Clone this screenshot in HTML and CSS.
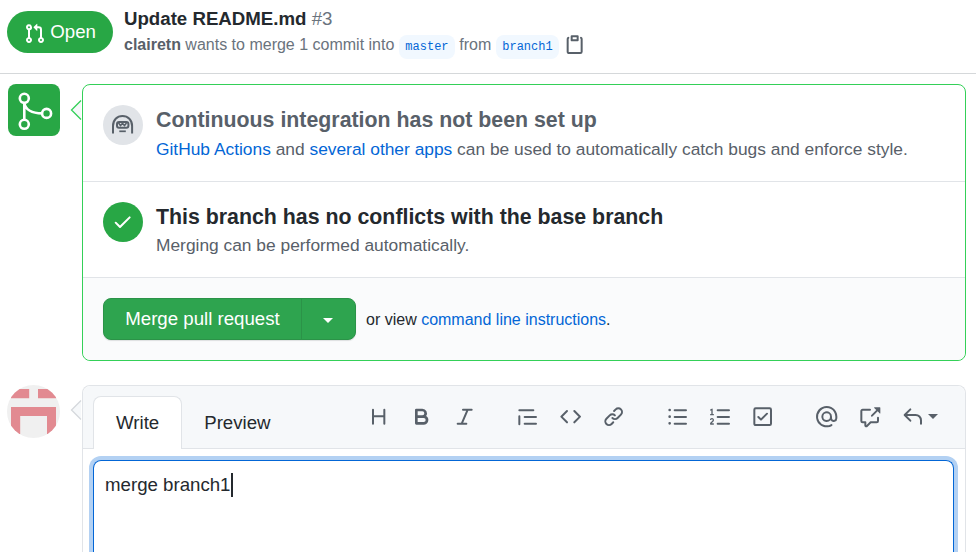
FILE: index.html
```html
<!DOCTYPE html>
<html lang="en">
<head>
<meta charset="utf-8">
<title>Update README.md #3</title>
<link rel="stylesheet" href="styles.css">
</head>
<body>
<header class="pr-header">
  <span class="state">
    <svg class="icon" viewBox="0 0 16 16"><path d="M7.177 3.073L9.573.677A.25.25 0 0110 .854v4.792a.25.25 0 01-.427.177L7.177 3.427a.25.25 0 010-.354zM3.75 2.5a.75.75 0 100 1.5.75.75 0 000-1.5zm-2.25.75a2.25 2.25 0 113 2.122v5.256a2.251 2.251 0 11-1.5 0V5.372A2.25 2.25 0 011.5 3.25zM11 2.5h-1V4h1a1 1 0 011 1v5.628a2.251 2.251 0 101.5 0V5A2.5 2.5 0 0011 2.5zm1 10.25a.75.75 0 111.5 0 .75.75 0 01-1.5 0zM3.75 12a.75.75 0 100 1.5.75.75 0 000-1.5z"/></svg>
    <span>Open</span>
  </span>
  <div class="pr-info">
    <h1 class="pr-title">Update README.md <span class="number">#3</span></h1>
    <div class="pr-meta"><span><b>clairetn</b> wants to merge 1 commit into</span><code class="ref">master</code><span>from</span><code class="ref">branch1</code>
      <svg class="icon copy" viewBox="0 0 16 16"><path d="M5.75 1a.75.75 0 00-.75.75v3c0 .414.336.75.75.75h4.5a.75.75 0 00.75-.75v-3a.75.75 0 00-.75-.75h-4.5zm.75 3V2.5h3V4h-3zm-2.874-.467a.75.75 0 00-.752-1.298A1.75 1.75 0 002 3.75v9.5c0 .966.784 1.75 1.75 1.75h8.5A1.75 1.75 0 0014 13.25v-9.5a1.75 1.75 0 00-.874-1.515.75.75 0 10-.752 1.298.25.25 0 01.126.217v9.5a.25.25 0 01-.25.25h-8.5a.25.25 0 01-.25-.25v-9.5a.25.25 0 01.126-.217z"/></svg>
    </div>
  </div>
</header>
<main>
  <section class="timeline merge">
    <div class="badge">
      <svg viewBox="0 0 52 52" fill="none" stroke="#fff" stroke-width="2.6"><circle cx="16.3" cy="14.3" r="4.5"/><circle cx="16.3" cy="40.3" r="4.5"/><circle cx="38.6" cy="29.4" r="4.5"/><path d="M16.3 18.8v17M16.3 19c1 6 7 10.4 17.800 10.400"/></svg>
    </div>
    <div class="panel merge-panel">
      <svg class="pointer" viewBox="0 0 11 20"><path d="M11 .5L1.500 10L11 19.500" fill="#f6f8fa" stroke="#34d058" stroke-width="1.300"/></svg>
      <div class="row row-ci">
        <span class="status pending">
          <svg viewBox="0 0 40 40" fill="none" stroke="#586069" stroke-width="2"><path d="M10 28.500v-7.500c0-6 4-10 9.500-10s9.600 4 9.600 10v7.500"/><rect x="14" y="17" width="11.400" height="5.700" rx="2"/><path d="M15.500 18l2 2.500 2-2 2 2 2-2.500" stroke-width="1.600"/><path d="M16.300 26.300h6.500" stroke-width="1.700"/></svg>
        </span>
        <div><h2 class="muted ci-title">Continuous integration has not been set up</h2><p class="desc ci-desc"><a>GitHub Actions</a> and <a>several other apps</a> can be used to automatically catch bugs and enforce style.</p></div>
      </div>
      <div class="row row-clean">
        <span class="status success"><svg viewBox="0 0 16 16" class="icon"><path d="M13.780 4.220a.75.75 0 010 1.060l-7.250 7.250a.75.75 0 01-1.060 0L2.220 9.280a.75.75 0 011.060-1.060L6 10.940l6.720-6.720a.75.75 0 011.060 0z"/></svg></span>
        <div><h2 class="clean-title">This branch has no conflicts with the base branch</h2><p class="desc clean-desc">Merging can be performed automatically.</p></div>
      </div>
      <div class="actions">
        <div class="button-group"><button class="button main-button">Merge pull request</button><button class="button menu-button" aria-label="Select merge method"><i class="caret"></i></button></div>
        <p class="cli">or view <a>command line instructions</a>.</p>
      </div>
    </div>
  </section>
  <section class="timeline comment">
    <div class="avatar"><svg viewBox="0 0 53 53"><rect width="53" height="53" fill="#f0f0f0"/><path d="M4 4h18.200v9.200H4zM31 4h18.200v9.200H31zM4 22h45v27h-9V31H13.200v18H4z" fill="#e28a91"/></svg></div>
    <div class="panel editor">
      <svg class="pointer" viewBox="0 0 11 20"><path d="M11 .5L1.500 10L11 19.500" fill="#f6f8fa" stroke="#d5d8dc" stroke-width="1.300"/></svg>
      <div class="tabs">
        <span class="tab selected">Write</span><span class="tab preview">Preview</span>
        <div class="toolbar">
          <div class="tools tools-text">
            <svg class="icon" viewBox="0 0 16 16"><path d="M3.750 2a.75.75 0 01.75.75V7h7V2.750a.75.75 0 011.500 0v10.500a.75.75 0 01-1.500 0V8.500h-7v4.750a.75.75 0 01-1.500 0V2.750A.75.75 0 013.750 2z"/></svg>
            <svg class="icon" viewBox="0 0 16 16"><path d="M4 2a1 1 0 00-1 1v10a1 1 0 001 1h5.500a3.500 3.500 0 001.852-6.470A3.500 3.500 0 008.500 2H4zm4.500 5a1.500 1.500 0 100-3H5v3h3.500zM5 9v3h4.500a1.500 1.500 0 000-3H5z" fill-rule="evenodd"/></svg>
            <svg class="icon" viewBox="0 0 16 16"><path d="M6 2.750A.75.75 0 016.750 2h6.500a.75.75 0 010 1.500h-2.505l-3.858 9H9.250a.75.75 0 010 1.500h-6.500a.75.75 0 010-1.500h2.505l3.858-9H6.750A.75.75 0 016 2.750z"/></svg>
          </div>
          <div class="tools tools-code">
            <svg class="icon" viewBox="0 0 16 16"><path d="M1.750 2.500a.75.75 0 000 1.500h10.500a.75.75 0 000-1.500H1.750zm4 5a.75.75 0 000 1.500h8.500a.75.75 0 000-1.500h-8.500zm0 5a.75.75 0 000 1.500h8.500a.75.75 0 000-1.500h-8.500zM2.500 7.750a.75.75 0 00-1.500 0v6a.75.75 0 001.500 0v-6z"/></svg>
            <svg class="icon" viewBox="0 0 16 16"><path d="M4.720 3.220a.75.75 0 011.060 1.060L2.060 8l3.720 3.720a.75.75 0 11-1.060 1.060L.47 8.530a.75.75 0 010-1.060l4.250-4.250zm6.560 0a.75.75 0 10-1.060 1.060L13.940 8l-3.720 3.720a.75.75 0 101.060 1.060l4.250-4.250a.75.75 0 000-1.060l-4.250-4.250z"/></svg>
            <svg class="icon" viewBox="0 0 16 16"><path d="M7.775 3.275a.75.75 0 001.060 1.060l1.250-1.250a2 2 0 112.830 2.830l-2.500 2.500a2 2 0 01-2.830 0 .75.75 0 00-1.060 1.060 3.500 3.500 0 004.950 0l2.500-2.500a3.500 3.500 0 00-4.950-4.950l-1.250 1.250zm-4.690 9.640a2 2 0 010-2.830l2.500-2.500a2 2 0 012.830 0 .75.75 0 001.060-1.060 3.500 3.500 0 00-4.950 0l-2.500 2.500a3.500 3.500 0 004.950 4.950l1.250-1.250a.75.75 0 00-1.060-1.060l-1.250 1.250a2 2 0 01-2.830 0z"/></svg>
          </div>
          <div class="tools tools-list">
            <svg class="icon" viewBox="0 0 16 16"><path d="M2 4a1 1 0 100-2 1 1 0 000 2zm3.750-1.500a.75.75 0 000 1.500h8.500a.75.75 0 000-1.500h-8.500zm0 5a.75.75 0 000 1.500h8.500a.75.75 0 000-1.500h-8.500zm0 5a.75.75 0 000 1.500h8.500a.75.75 0 000-1.500h-8.500zM3 8a1 1 0 11-2 0 1 1 0 012 0zm-1 6a1 1 0 100-2 1 1 0 000 2z"/></svg>
            <svg class="icon" viewBox="0 0 16 16"><path d="M2.003 2.500a.5.5 0 00-.723-.447l-1.003.5a.5.5 0 00.446.895l.28-.14V6H.5a.5.5 0 000 1h2.006a.5.5 0 100-1h-.503V2.500zM5 3.250a.75.75 0 01.75-.75h8.500a.75.75 0 010 1.500h-8.500A.75.75 0 015 3.250zm0 5a.75.75 0 01.75-.75h8.500a.75.75 0 010 1.500h-8.500A.75.75 0 015 8.250zm0 5a.75.75 0 01.75-.75h8.500a.75.75 0 010 1.500h-8.500a.75.75 0 01-.75-.75zM.924 10.320a.5.5 0 01-.851-.525l.001-.001.001-.002.002-.004.007-.011c.097-.144.215-.273.348-.384.228-.190.588-.392 1.068-.392.468 0 .858.181 1.126.484.259.294.377.673.377 1.038 0 .987-.686 1.495-1.156 1.845l-.047.035c-.303.225-.522.400-.654.597h1.357a.5.5 0 010 1H.5a.5.5 0 01-.5-.5c0-1.005.692-1.520 1.167-1.875l.035-.025c.531-.396.800-.625.800-1.078a.57.57 0 00-.128-.376C1.806 10.068 1.695 10 1.500 10a.658.658 0 00-.429.163.835.835 0 00-.144.153l-.003.004z"/></svg>
            <svg class="icon" viewBox="0 0 16 16"><path d="M2.500 2.750a.25.25 0 01.25-.25h10.500a.25.25 0 01.25.25v10.500a.25.25 0 01-.25.25H2.750a.25.25 0 01-.25-.25V2.750zM2.750 1A1.750 1.750 0 001 2.750v10.500c0 .966.784 1.750 1.750 1.750h10.500A1.750 1.750 0 0015 13.250V2.750A1.750 1.750 0 0013.250 1H2.750zm9.030 5.280a.75.75 0 00-1.060-1.060L6.750 9.190 5.280 7.720a.75.75 0 00-1.060 1.060l2 2a.75.75 0 001.060 0l4.500-4.500z"/></svg>
          </div>
          <div class="tools tools-social">
            <svg class="icon" viewBox="0 0 16 16"><path d="M4.750 2.370a6.500 6.500 0 006.500 11.260.75.75 0 01.75 1.298 8 8 0 113.994-7.273.754.754 0 01.006.095v1.500a2.750 2.750 0 01-5.072 1.475A4 4 0 1112 8v1.250a1.250 1.250 0 002.500 0V7.867a6.500 6.500 0 00-9.750-5.496V2.370zM10.500 8a2.500 2.500 0 10-5 0 2.500 2.500 0 005 0z"/></svg>
            <svg class="icon" viewBox="0 0 16 16"><path d="M16 1.250v4.146a.25.25 0 01-.427.177L14.030 4.030l-3.750 3.750a.75.75 0 11-1.060-1.060l3.750-3.750-1.543-1.543A.25.25 0 0111.604 1h4.146a.25.25 0 01.25.25zM2.750 3.500a.25.25 0 00-.25.25v7.500c0 .138.112.250.250.250h2a.75.75 0 01.75.75v2.190l2.720-2.720a.75.75 0 01.530-.220h4.500a.25.25 0 00.250-.250v-2.500a.75.75 0 111.500 0v2.500A1.750 1.750 0 0113.250 13H9.060l-2.573 2.573A1.457 1.457 0 014 14.543V13H2.750A1.750 1.750 0 011 11.250v-7.500C1 2.784 1.784 2 2.750 2h5.500a.75.75 0 010 1.500h-5.500z"/></svg>
            <span class="reply"><svg class="icon" viewBox="0 0 16 16"><path d="M6.780 1.970a.75.75 0 010 1.060L3.810 6h6.440A4.750 4.750 0 0115 10.750v2.500a.75.75 0 01-1.500 0v-2.500a3.250 3.250 0 00-3.250-3.250H3.810l2.970 2.970a.75.75 0 11-1.060 1.060L1.470 7.280a.75.75 0 010-1.060l4.250-4.250a.75.75 0 011.060 0z"/></svg><i class="caret"></i></span>
          </div>
        </div>
      </div>
      <div class="input">merge branch1<i class="cursor"></i></div>
    </div>
  </section>
</main>
</body>
</html>
```
FILE: styles.css
```css
* { box-sizing: border-box; }
body { margin: 0; height: 552px; background: #fff; color: #24292e; font-family: "Liberation Sans", Arial, sans-serif; }
h1, h2, p { margin: 0; }
a { color: #0366d6; }
svg { display: block; flex: none; overflow: visible; }
.icon { width: 21.33px; height: 21.33px; fill: currentColor; }
.pr-header { display: flex; height: 74px; padding: 11px 7px 0; border-bottom: 1px solid #d5d8da; }
.state { display: flex; align-items: center; width: 106px; height: 42px; padding-left: 17px; gap: 5px; border-radius: 21px; background: #28a745; color: #fff; font-size: 18.67px; }
.state .icon { position: relative; top: 2px; }
.pr-info { margin-left: 11px; }
.pr-title { margin-top: -4px; font-size: 18.67px; line-height: 24px; }
.number { font-weight: 400; color: #6a737d; }
.pr-meta { display: flex; align-items: center; height: 26px; margin-top: 1px; color: #6a737d; font-size: 16px; white-space: nowrap; }
.pr-meta b { color: #586069; }
.ref { height: 24px; margin: 3px 4.7px 0 5px; padding: 0 6px; border-radius: 8px; background: #f1f8ff; color: #0366d6; font: 12px/24px "Liberation Mono", monospace; }
.copy { margin-left: 1px; color: #586069; }
.timeline { display: flex; }
.merge { padding: 10px 10px 0 8px; }
.badge { width: 52px; height: 52px; border-radius: 8px; background: #28a745; }
.panel { position: relative; flex: 1; margin-left: 22px; border: 1px solid #e1e4e8; border-radius: 8px; }
.merge-panel { height: 277px; border-color: #34d058; }
.pointer { position: absolute; left: -13px; top: 15px; width: 11px; height: 20px; }
.editor .pointer { top: 14px; }
.row { display: flex; gap: 13px; padding: 20px 20px 0; border-bottom: 1px solid #e1e4e8; }
.row-ci { height: 97px; }
.row-clean { height: 96px; }
.status { flex: none; width: 40px; height: 40px; border-radius: 50%; }
.pending { background: #e1e4e8; }
.success { display: grid; place-items: center; background: #28a745; color: #fff; }
h2 { font-size: 21.33px; line-height: 28px; }
.muted, .desc { color: #586069; }
.desc { font-size: 17.37px; line-height: 26px; white-space: nowrap; }
.ci-title, .clean-title { margin-top: 1px; }
.ci-desc { margin-top: 2px; }
.clean-desc { margin-top: 1px; }
.actions { display: flex; align-items: center; height: 82px; padding: 0 20px; border-radius: 0 0 8px 8px; background: #fafbfc; }
.button-group { display: flex; width: 253px; height: 42px; border: 1px solid #2b9348; border-radius: 8px; background: #2ea44f; box-shadow: 0 1px 1px #1b1f2320; }
.button { border: 0; padding: 0; background: none; color: #fff; font: 18.67px "Liberation Sans", Arial, sans-serif; }
.main-button { width: 197px; }
.menu-button { display: grid; place-items: center; flex: 1; padding: 2px 1px 0 0; border-left: 1px solid #2b9348; }
.caret { width: 0; height: 0; border: 5.3px solid transparent; border-top-color: currentColor; border-bottom: 0; }
.cli { margin: 2px 0 0 10px; font-size: 16px; }
.comment { padding: 24px 10px 0 7px; }
.avatar { width: 53px; height: 53px; overflow: hidden; border-radius: 50%; }
.editor { height: 167px; border-bottom: 0; border-radius: 8px 8px 0 0; }
.tabs { display: flex; height: 63px; padding: 10px 10px 0; border-bottom: 1px solid #e1e4e8; border-radius: 8px 8px 0 0; background: #f6f8fa; }
.tab { height: 53px; padding: 0 22px; font-size: 18.67px; line-height: 51px; border: 1px solid transparent; border-bottom: 0; }
.selected { border-color: #e1e4e8; border-radius: 8px 8px 0 0; background: #fff; }
.preview { padding-left: 21px; }
.toolbar { display: flex; height: 42px; align-items: center; margin-left: auto; margin-right: 17px; color: #586069; }
.tools { display: flex; gap: 21.5px; }
.tools-text { margin-right: -1px; }
.tools-code { margin-left: 43px; }
.tools-list { margin-left: 43px; gap: 20.8px; }
.tools-social { margin-left: 43px; }
.reply { display: flex; align-items: center; gap: 5px; }
.input { display: flex; height: 92px; margin: 11px 11px 0 10px; padding: 11px; border: 1px solid #0366d6; border-bottom: 0; border-radius: 8px 8px 0 0; box-shadow: 0 0 0 4px #b3d1f3; font-size: 18.67px; line-height: 26px; }
.cursor { width: 2px; height: 24px; margin: 1px 0 0 1px; background: #24292e; }
```
